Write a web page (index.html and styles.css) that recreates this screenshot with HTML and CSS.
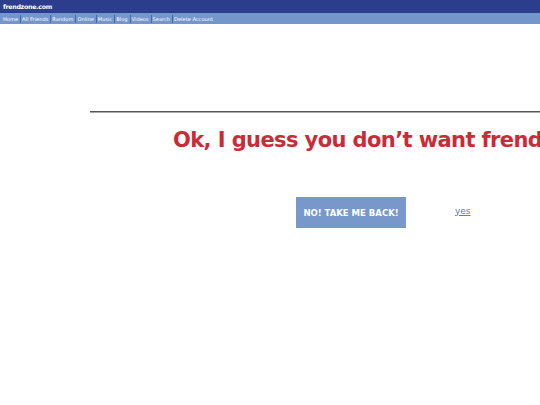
FILE: index.html
```html
<!DOCTYPE html>
<html>
<head>
<meta charset="utf-8">
<link rel="stylesheet" href="styles.css">
</head>
<body>
<div class="topbar"><span class="logo">frendzone.com</span></div>
<nav class="navbar">
  <a class="nav-item">Home</a><a class="nav-item">All Friends</a><a class="nav-item">Random</a><a class="nav-item">Online</a><a class="nav-item">Music</a><a class="nav-item">Blog</a><a class="nav-item">Videos</a><a class="nav-item">Search</a><a class="nav-item">Delete Account</a>
</nav>
<main class="content">
  <div class="rule"></div>
  <h1 class="headline">Ok, I guess you don’t want frendzone.com anymore.</h1>
  <div class="actions">
    <button class="back-btn">NO! TAKE ME BACK!</button>
    <a class="yes-link" href="#">yes</a>
  </div>
</main>
</body>
</html>
```
FILE: styles.css
```css
html, body {
  margin: 0;
  padding: 0;
  background: #ffffff;
  overflow: hidden;
  font-family: "DejaVu Sans", Verdana, sans-serif;
}
.topbar {
  height: 13px;
  background: #2b3d8c;
  display: flex;
  align-items: center;
  padding-left: 3px;
}
.logo {
  color: #ffffff;
  font-weight: bold;
  font-size: 6.3px;
  letter-spacing: -0.3px;
}
.navbar {
  height: 11px;
  background: #7596cb;
  display: flex;
  align-items: center;
  padding-left: 2px;
}
.nav-item {
  color: #ffffff;
  font-size: 5.1px;
  padding: 0 2px 0 1px;
  border-left: 1px solid #4a68a5;
  line-height: 8px;
}
.nav-item:first-child {
  border-left: none;
}
.content {
  padding-left: 90px;
  padding-top: 87px;
}
.rule {
  height: 1px;
  background: #555555;
  border-bottom: 1px solid #aaaaaa;
}
.headline {
  margin: 12px 0 0 83px;
  white-space: nowrap;
  color: #cc2a36;
  font-size: 21px;
  letter-spacing: -0.6px;
  font-weight: bold;
  line-height: 30px;
}
.actions {
  display: flex;
  align-items: center;
  margin: 42px 0 0 206px;
}
.back-btn {
  width: 110px;
  height: 31px;
  border: none;
  background: #7898cb;
  color: #ffffff;
  font-family: "DejaVu Sans", Verdana, sans-serif;
  font-weight: bold;
  font-size: 8.5px;
  padding: 0;
}
.yes-link {
  margin-left: 49px;
  margin-top: -4px;
  color: #5b7ec4;
  font-size: 9px;
  text-decoration: underline;
}
```
